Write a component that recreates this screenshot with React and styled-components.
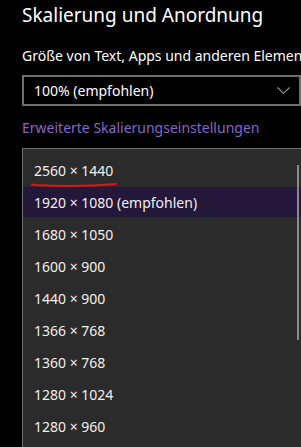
import React from "react";
import styled, { createGlobalStyle } from "styled-components";

const Global = createGlobalStyle`
  html, body { margin: 0; padding: 0; background: #000; }
  body { font-family: "Noto Sans", "Open Sans", sans-serif; overflow: hidden; }
  #root { width: 301px; height: 447px; overflow: hidden; }
`;

const Page = styled.div`
  width: 301px;
  height: 447px;
  background: #000;
  padding-left: 22px;
  box-sizing: border-box;
  display: flex;
  flex-direction: column;
  overflow: hidden;
`;

const Title = styled.h1`
  margin: 0;
  padding-top: 1px;
  font-size: 19px;
  font-weight: 400;
  line-height: 28px;
  color: #fff;
  white-space: nowrap;
`;

const Label = styled.div`
  margin-top: 17px;
  font-size: 14px;
  line-height: 20px;
  color: #fff;
  white-space: nowrap;
`;

const Select = styled.div`
  margin-top: 9px;
  height: 31px;
  width: 279px;
  box-sizing: border-box;
  border: 2px solid #6e6e6e;
  display: flex;
  align-items: center;
  justify-content: space-between;
  padding: 0 9px 0 10px;
  color: #fff;
  font-size: 14px;
`;

const Chevron = styled.svg`
  width: 13px;
  height: 7px;
  flex-shrink: 0;
`;

const Link = styled.div`
  margin-top: 12px;
  font-size: 14px;
  line-height: 20px;
  color: #8767c9;
  white-space: nowrap;
`;

const Panel = styled.div`
  position: relative;
  margin-top: 10px;
  flex: 1;
  width: 279px;
  box-sizing: border-box;
  background: #2b2b2b;
  border-top: 1px solid #6f6f6f;
  border-left: 1px solid #6f6f6f;
  padding-top: 5px;
`;

const Item = styled.div`
  position: relative;
  height: 32px;
  box-sizing: border-box;
  border-top: 1px solid transparent;
  border-bottom: 1px solid transparent;
  background-clip: padding-box;
  background-color: ${(p) => (p.$active ? "#23173a" : "transparent")};
  display: flex;
  align-items: center;
  padding-left: 11px;
  font-size: 14px;
  color: #f0f0f0;
  white-space: nowrap;
`;

const Scrollbar = styled.div`
  position: absolute;
  right: 2px;
  top: 16px;
  width: 2px;
  height: 175px;
  background: #8a8a8a;
`;

const Underline = styled.svg`
  position: absolute;
  left: -4px;
  top: 20px;
  width: 90px;
  height: 8px;
  pointer-events: none;
`;

const items = [
  "2560 × 1440",
  "1920 × 1080 (empfohlen)",
  "1680 × 1050",
  "1600 × 900",
  "1440 × 900",
  "1366 × 768",
  "1360 × 768",
  "1280 × 1024",
  "1280 × 960",
];

export default function App() {
  return (
    <>
      <Global />
      <Page>
        <Title>Skalierung und Anordnung</Title>
        <Label>Größe von Text, Apps und anderen Elementen ändern</Label>
        <Select>
          <span>100% (empfohlen)</span>
          <Chevron viewBox="0 0 13 7">
            <path d="M0.5 0.5 L6.5 6.3 L12.5 0.5" fill="none" stroke="#9a9a9a" strokeWidth="1.1" />
          </Chevron>
        </Select>
        <Link>Erweiterte Skalierungseinstellungen</Link>
        <Panel>
          {items.map((t, i) => (
            <Item key={t} $active={i === 1}>
              {i === 0 ? (
                <span style={{ position: "relative" }}>
                  {t}
                  <Underline viewBox="0 0 90 8">
                    <path d="M2 3.5 C 20 5.5, 55 5.5, 86 3" fill="none" stroke="#e01515" strokeWidth="2" strokeLinecap="round" />
                  </Underline>
                </span>
              ) : (
                t
              )}
            </Item>
          ))}
          <Scrollbar />
        </Panel>
      </Page>
    </>
  );
}
